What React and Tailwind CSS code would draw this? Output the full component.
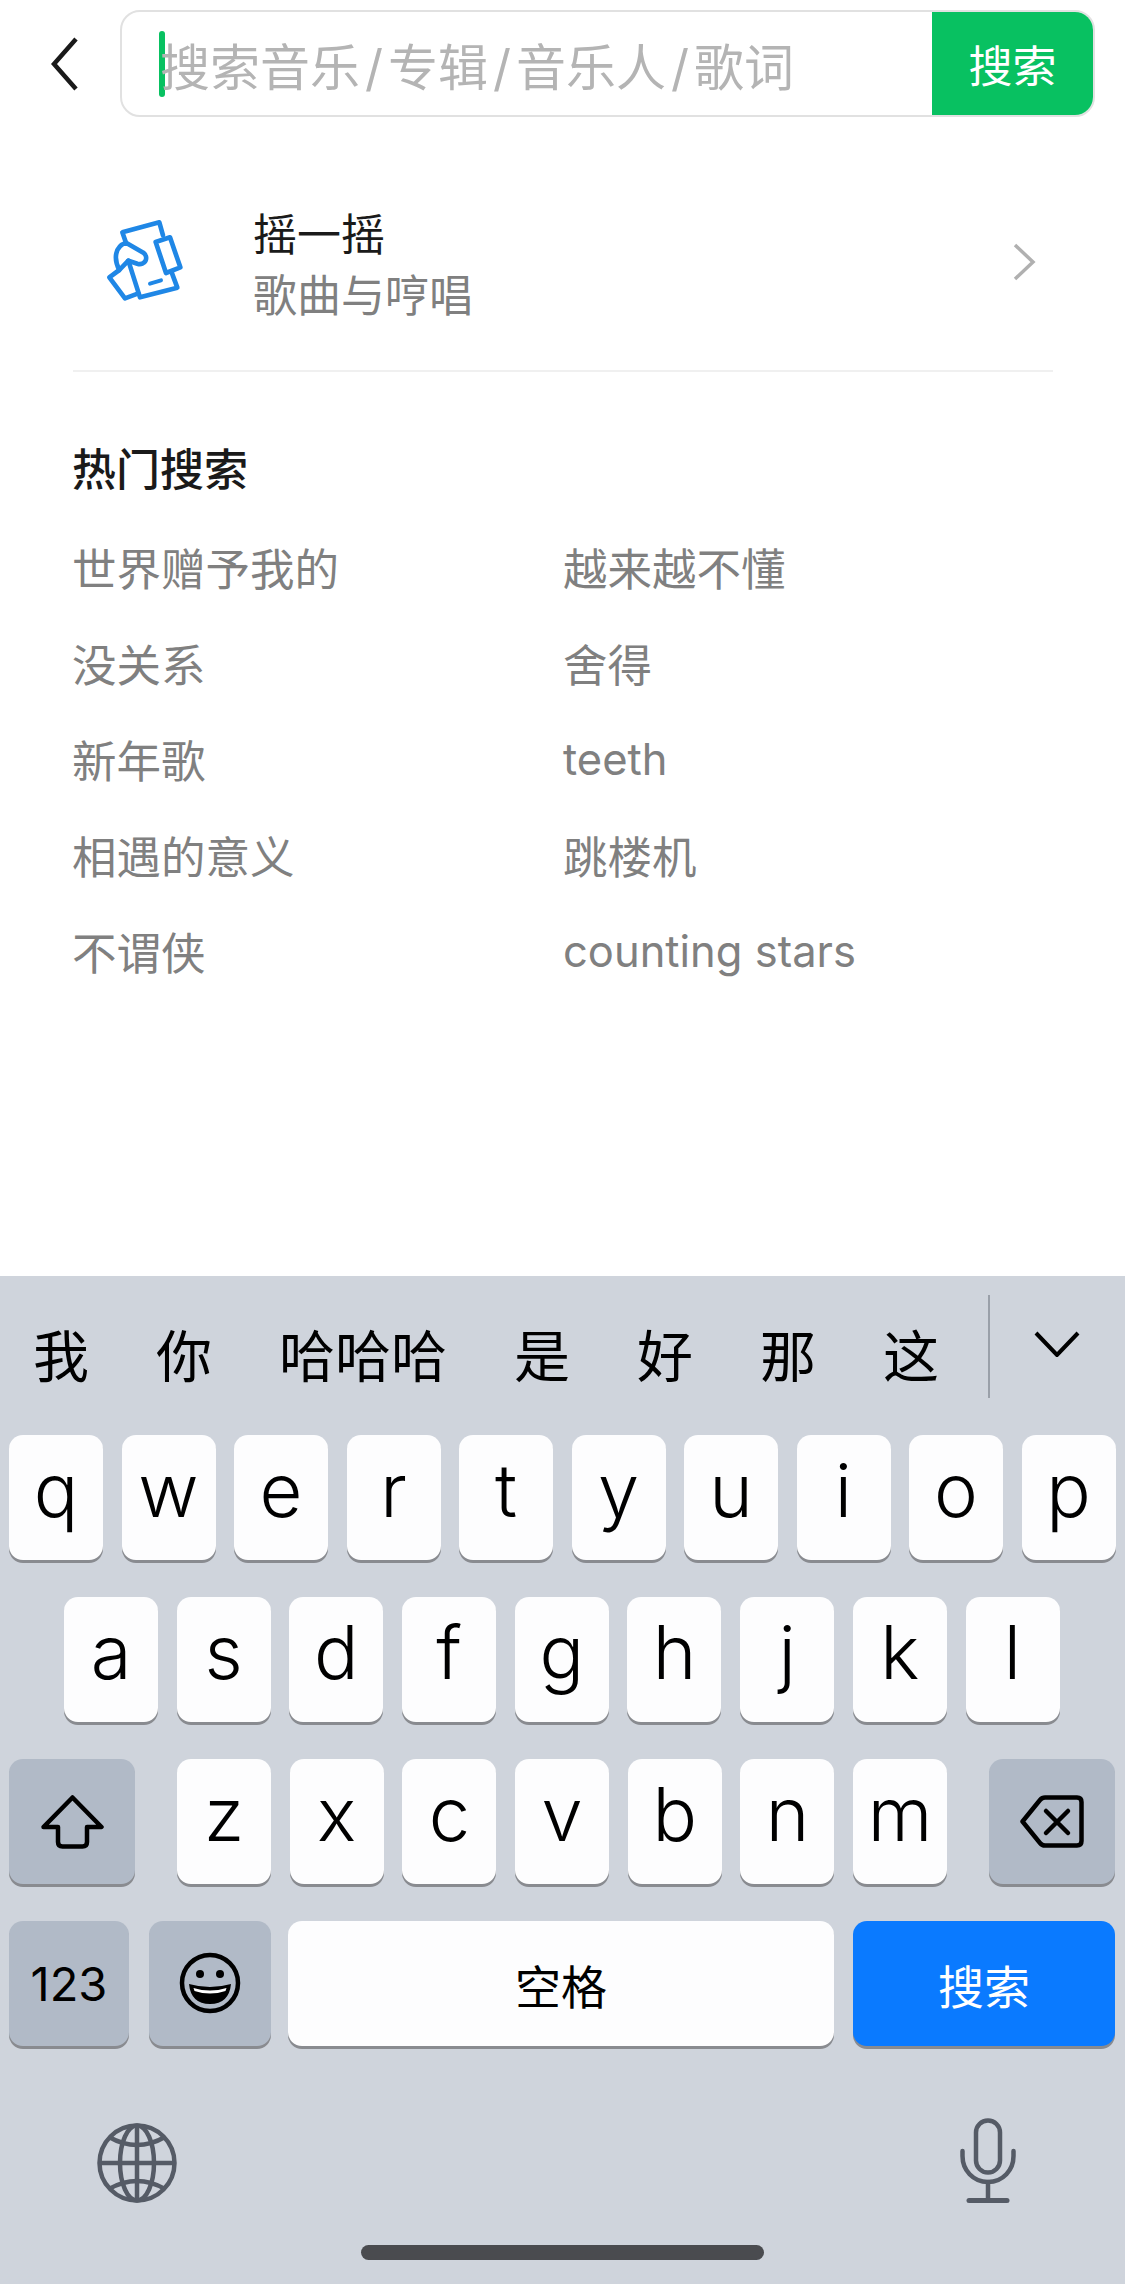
const Key = ({ children, className = "w-[94px] bg-[#fdfdfe]" }) => (
  <div className={`h-[125px] rounded-[14px] shadow-[0_3px_0_#898b90] flex items-center justify-center shrink-0 text-black ${className}`}>
    {children}
  </div>
);

const Letter = ({ c }) => (
  <Key>
    <span className="text-[74px] leading-none font-light font-['Inter',sans-serif] -translate-y-[8px]">{c}</span>
  </Key>
);

const Row = ({ keys }) => keys.split("").map((c) => <Letter key={c} c={c} />);

const GRAY = "w-[126px] bg-[#b1bac7]";

const hot = [
  ["世界赠予我的", "越来越不懂"],
  ["没关系", "舍得"],
  ["新年歌", "teeth"],
  ["相遇的意义", "跳楼机"],
  ["不谓侠", "counting stars"],
];

function ShakeIcon() {
  return (
    <svg width="160" height="140" viewBox="0 0 480 420" fill="none" stroke="#1f87e6" strokeWidth="14" strokeLinecap="round" strokeLinejoin="round" className="shrink-0 -ml-[13px] -translate-y-[2px]">
      <path d="M198 158 L187 127 L298 97 L309 136" />
      <path d="M335 247 L352 293 L240 322 L205 212" />
      <path d="M270 281 L303 271" strokeWidth="12" />
      <path d="M287 156 L330 142 L361 232 L318 249 Z" />
      <path d="M178 240 C160 205 165 170 198 158 L250 188 C268 202 255 228 232 221 L205 212 Z" />
      <path d="M178 240 L148 262 L195 325 L235 310" />
    </svg>
  );
}

export default function App() {
  return (
    <div className="w-[1125px] h-[2284px] overflow-hidden bg-white flex flex-col font-['Inter','Noto_Sans_CJK_SC',sans-serif]">
      <div className="h-[1276px] shrink-0">
        <div className="flex items-center pt-[10px] pl-[50px] pr-[30px]">
          <svg width="30" height="54" viewBox="0 0 30 54" fill="none" stroke="#1a1a1a" strokeWidth="4.5" className="shrink-0">
            <path d="M26 2 L4 27 L26 52" />
          </svg>
          <div className="ml-[40px] flex-1 h-[107px] rounded-[20px] border-2 border-[#e1e1e1] flex overflow-hidden">
            <div className="flex-1 flex items-center pl-[37px]">
              <div className="w-[6px] h-[66px] rounded-[3px] bg-[#08c161] shrink-0" />
              <span className="text-[50px] leading-none text-[#b4b4b4] -ml-[5px] translate-y-[4px]">
                搜索音乐<span className="mx-[5px]">/</span>专辑<span className="mx-[5px]">/</span>音乐人<span className="mx-[5px]">/</span>歌词
              </span>
            </div>
            <div className="w-[161px] bg-[#08c161] text-white text-[44px] leading-none flex items-center justify-center">
              <span className="translate-y-[3px]">搜索</span>
            </div>
          </div>
        </div>

        <div className="ml-[73px] mr-[72px] h-[255px] pt-[36px] border-b-2 border-[#f0f0f0] flex items-center">
          <div className="flex items-center flex-1">
            <ShakeIcon />
            <div className="ml-[33px] flex flex-col gap-[15px] translate-y-[4px]">
              <span className="text-[44px] leading-[46px] text-[#1a1a1a]">摇一摇</span>
              <span className="text-[44px] leading-[46px] text-[#808080]">歌曲与哼唱</span>
            </div>
          </div>
          <svg width="24" height="38" viewBox="0 0 24 38" fill="none" stroke="#b0b0b0" strokeWidth="3.5" className="shrink-0 mr-[17px]">
            <path d="M3 2 L21 19 L3 36" />
          </svg>
        </div>

        <div className="mt-[74px] pl-[72px] pr-[73px]">
          <div className="text-[44px] leading-[48px] font-medium text-[#1a1a1a]">热门搜索</div>
          <div className="mt-[52px] flex flex-col gap-[48px]">
            {hot.map(([a, b]) => (
              <div key={a} className="flex h-[48px] items-center text-[#808080]">
                <span className="w-[491px] text-[44.5px] leading-[48px]">{a}</span>
                {/[a-z]/.test(b) ? (
                  <span className="text-[43.5px] leading-[48px] -translate-y-[3px]">{b}</span>
                ) : (
                  <span className="text-[44.5px] leading-[48px]">{b}</span>
                )}
              </div>
            ))}
          </div>
        </div>
      </div>

      <div className="flex-1 bg-[#cfd4dc] flex flex-col font-['Liberation_Sans','Noto_Sans_CJK_SC',sans-serif]">
        <div className="h-[159px] shrink-0 flex items-start">
          <div className="w-[988px] h-[159px] pl-[33px] pb-[6px] flex items-center gap-[67px] text-[56px] leading-none text-black font-['Noto_Sans_CJK_SC',sans-serif]">
            <span>我</span><span>你</span><span>哈哈哈</span><span>是</span><span>好</span><span>那</span><span>这</span>
          </div>
          <div className="mt-[19px] w-[2px] h-[103px] bg-[#9aa0a9] shrink-0" />
          <svg width="46" height="26" viewBox="0 0 46 26" fill="none" stroke="#000" strokeWidth="4" className="ml-[44px] mt-[55px] shrink-0">
            <path d="M2 2 L23 24 L44 2" />
          </svg>
        </div>

        <div className="flex flex-col gap-[37px]">
          <div className="flex gap-[18.5px] pl-[9px]"><Row keys="qwertyuiop" /></div>
          <div className="flex gap-[18.7px] pl-[64px]"><Row keys="asdfghjkl" /></div>
          <div className="flex pl-[9px]">
            <Key className={GRAY}>
              <svg width="63" height="54" viewBox="0 0 63 54" fill="none" stroke="#000" strokeWidth="4.5" strokeLinejoin="round">
                <path d="M31.5 2.5 L60.5 32 L46 32 L46 47 Q46 51.5 41.5 51.5 L21.5 51.5 Q17 51.5 17 47 L17 32 L2.5 32 Z" />
              </svg>
            </Key>
            <div className="ml-[42px] flex gap-[18.7px]"><Row keys="zxcvbnm" /></div>
            <Key className={`${GRAY} ml-[42px]`}>
              <svg width="64" height="53" viewBox="0 0 64 53" fill="none" stroke="#000" strokeWidth="4.5" strokeLinejoin="round" strokeLinecap="round">
                <path d="M2.5 26.5 L20 5 Q22 2.5 25 2.5 L57 2.5 Q61.5 2.5 61.5 7 L61.5 46 Q61.5 50.5 57 50.5 L25 50.5 Q22 50.5 20 48 Z" />
                <path d="M26 16 L48 38 M48 16 L26 38" />
              </svg>
            </Key>
          </div>
          <div className="flex pl-[9px]">
            <Key className="w-[120px] bg-[#b1bac7]">
              <span className="text-[47px] leading-none font-['Inter',sans-serif]">123</span>
            </Key>
            <Key className="w-[122px] ml-[20px] bg-[#b1bac7]">
              <svg width="62" height="62" viewBox="0 0 62 62" className="-translate-y-[1px]">
                <circle cx="31" cy="31" r="28" fill="none" stroke="#000" strokeWidth="4.5" />
                <circle cx="21" cy="22" r="4" fill="#000" />
                <circle cx="41" cy="22" r="4" fill="#000" />
                <path d="M10 32 Q31 38 52 32 Q50 52 31 52 Q12 52 10 32 Z" fill="#000" />
                <path d="M14.5 36 Q31 41 47.5 36 L46.5 39 Q31 44 15.5 39 Z" fill="#fff" />
              </svg>
            </Key>
            <Key className="w-[546px] ml-[17px] bg-[#fdfdfe]">
              <span className="text-[46px] leading-none font-['Noto_Sans_CJK_SC',sans-serif]">空格</span>
            </Key>
            <Key className="w-[262px] ml-[19px] bg-[#0a7aff]">
              <span className="text-[46px] leading-none text-white font-['Noto_Sans_CJK_SC',sans-serif]">搜索</span>
            </Key>
          </div>
        </div>

        <div className="mt-[72px] flex items-end justify-between pl-[97px] pr-[109px]">
          <svg width="80" height="80" viewBox="0 0 80 80" fill="none" stroke="#555b66" strokeWidth="4.5">
            <circle cx="40" cy="40" r="37.5" />
            <ellipse cx="40" cy="40" rx="17" ry="37.5" />
            <path d="M40 2.5 V77.5 M2.5 40 H77.5" />
            <path d="M12 14 Q40 30 68 14 M12 66 Q40 50 68 66" />
          </svg>
          <svg width="56" height="85" viewBox="0 0 56 85" fill="none" stroke="#555b66" strokeWidth="4.5" strokeLinecap="round">
            <rect x="16" y="2.5" width="24" height="52" rx="12" />
            <path d="M2.5 33 V38 C2.5 52 13 64 28 64 C43 64 53.5 52 53.5 38 V33" />
            <path d="M28 64 V82" />
            <path d="M9 82.5 H47" strokeWidth="5" />
          </svg>
        </div>

        <div className="mt-[42px] mx-auto w-[403px] h-[15px] rounded-full bg-[#4a4b4f] shrink-0" />
      </div>
    </div>
  );
}
